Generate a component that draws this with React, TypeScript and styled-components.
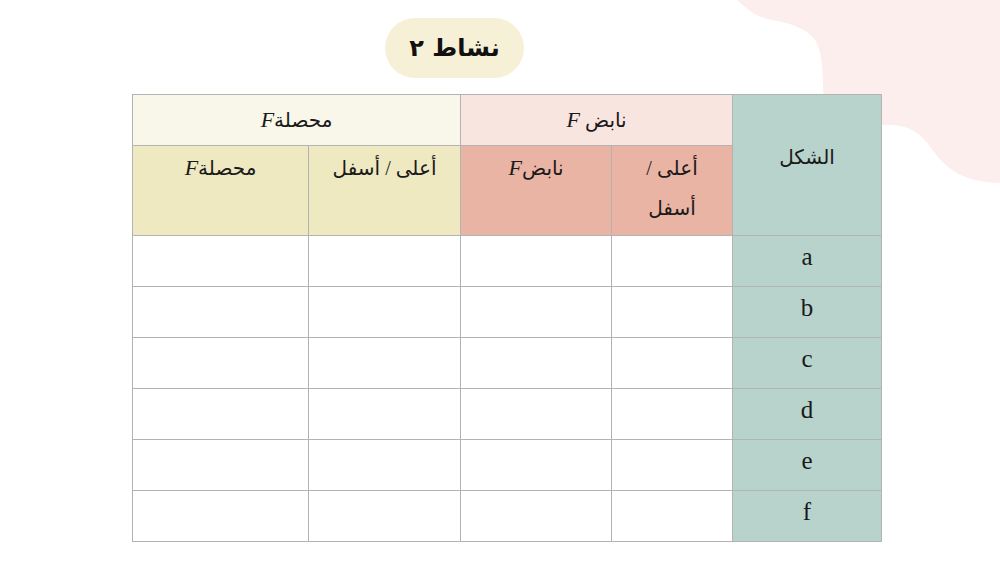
import React from 'react';
import styled, { createGlobalStyle } from 'styled-components';

const GlobalStyle = createGlobalStyle`
  html, body {
    margin: 0;
    padding: 0;
    background: #ffffff;
  }
  body {
    font-family: 'Liberation Serif', 'DejaVu Sans', serif;
    color: #1a1a1a;
  }
`;

const rows = ['a', 'b', 'c', 'd', 'e', 'f'];

const Blob = () => (
  <BlobSvg viewBox='720 0 280 200' width='280' height='200'>
    <path
      d='M737 0 C748 10 758 18 772 20 C790 23 806 28 815 40 C821 50 822 62 823 80 L824 125 L890 125 C910 125 922 134 934 152 C948 170 964 182 1000 183 L1000 0 Z'
      fill='#fbeeec'
    />
  </BlobSvg>
);

const App = () => {
  return (
    <>
      <GlobalStyle />
      <Slide>
        <Blob />
        <TitleRow>
          <TitlePill>نشاط ٢</TitlePill>
        </TitleRow>
        <Table dir='rtl'>
          <colgroup>
            <col style={{ width: 149 }} />
            <col style={{ width: 121 }} />
            <col style={{ width: 151 }} />
            <col style={{ width: 152 }} />
            <col style={{ width: 176 }} />
          </colgroup>
          <tbody>
            <Row $h={51}>
              <ShapeHead rowSpan={2}>الشكل</ShapeHead>
              <GroupHead colSpan={2} $tone='spring'>
                نابض <Var>F</Var>
              </GroupHead>
              <GroupHead colSpan={2} $tone='net'>
                محصلة<Var>F</Var>
              </GroupHead>
            </Row>
            <Row $h={90}>
              <SubHead $tone='spring'>
                أعلى /
                <br />
                أسفل
              </SubHead>
              <SubHead $tone='spring'>
                نابض<Var>F</Var>
              </SubHead>
              <SubHead $tone='net'>أعلى / أسفل</SubHead>
              <SubHead $tone='net'>
                محصلة<Var>F</Var>
              </SubHead>
            </Row>
            {rows.map((r) => (
              <Row key={r} $h={51}>
                <Label>{r}</Label>
                <Cell />
                <Cell />
                <Cell />
                <Cell />
              </Row>
            ))}
          </tbody>
        </Table>
      </Slide>
    </>
  );
};

export default App;

const Slide = styled.div`
  position: relative;
  width: 1000px;
  height: 562px;
  overflow: hidden;
  background: #ffffff;
  display: flex;
  flex-direction: column;
  padding: 18px 0 0 132px;
  box-sizing: border-box;
`;

const BlobSvg = styled.svg`
  position: absolute;
  top: 0;
  right: 0;
  z-index: 0;
`;

const TitleRow = styled.div`
  position: relative;
  z-index: 1;
  display: flex;
  padding-left: 253px;
  height: 60px;
  margin-bottom: 16px;
`;

const TitlePill = styled.div`
  width: 139px;
  height: 60px;
  border-radius: 30px;
  background: #f5f0d6;
  display: flex;
  align-items: center;
  justify-content: center;
  font-family: 'DejaVu Sans', serif;
  font-weight: bold;
  font-size: 24px;
  color: #111;
  direction: rtl;
`;

const Table = styled.table`
  position: relative;
  z-index: 1;
  width: 749px;
  border-collapse: collapse;
  table-layout: fixed;
  font-size: 20px;

  td {
    border: 1px solid #b3b3b3;
    padding: 0;
  }
`;

const Row = styled.tr<{ $h: number }>`
  height: ${(p) => p.$h}px;
`;

const Var = styled.i`
  font-family: 'Liberation Serif', serif;
  font-size: 22px;
`;

const ShapeHead = styled.td`
  background: #b8d2cc;
  text-align: center;
  vertical-align: top;
  && {
    padding-top: 50px;
  }
`;

const GroupHead = styled.td<{ $tone: 'spring' | 'net' }>`
  text-align: center;
  vertical-align: middle;
  background: ${(p) => (p.$tone === 'spring' ? '#f8e5e0' : '#f9f6ea')};
`;

const SubHead = styled.td<{ $tone: 'spring' | 'net' }>`
  text-align: center;
  vertical-align: top;
  line-height: 40px;
  background: ${(p) => (p.$tone === 'spring' ? '#eab4a4' : '#efe9c1')};
  && {
    padding-top: 2px;
  }
`;

const Label = styled.td`
  background: #b8d2cc;
  text-align: center;
  vertical-align: top;
  font-family: 'Liberation Serif', serif;
  font-size: 25px;
  line-height: 30px;
  && {
    padding-top: 6px;
  }
`;

const Cell = styled.td`
  background: #ffffff;
`;
